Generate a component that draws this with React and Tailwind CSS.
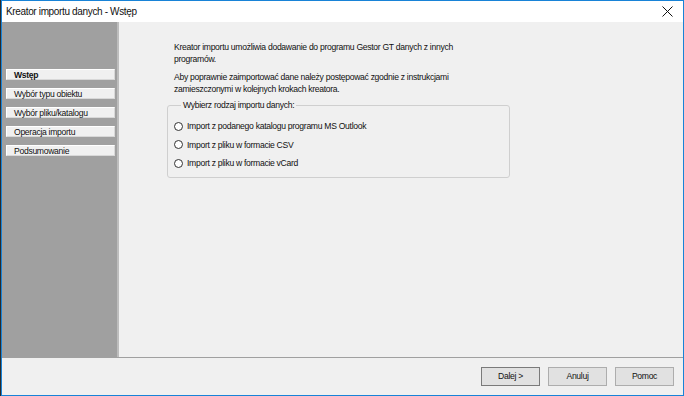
import React from "react";

const steps = [
  { id: 1, label: "Wstęp", active: true },
  { id: 2, label: "Wybór typu obiektu" },
  { id: 3, label: "Wybór pliku/katalogu" },
  { id: 4, label: "Operacja importu" },
  { id: 5, label: "Podsumowanie" },
];

const options = [
  "Import z podanego katalogu programu MS Outlook",
  "Import z pliku w formacie CSV",
  "Import z pliku w formacie vCard",
];

function StepItem({ step }) {
  return (
    <div
      className={
        "h-[11px] leading-[10px] pl-[7px] bg-[#f0f0f0] border-t border-l border-white border-b border-r border-b-[#d8d8d8] border-r-[#d8d8d8] whitespace-nowrap " +
        (step.active ? "font-bold" : "")
      }
    >
      {step.label}
    </div>
  );
}

function Radio({ label }) {
  return (
    <label className="flex items-center h-[18.5px] gap-[4px]">
      <span className="w-[9px] h-[9px] rounded-full border border-[#333] bg-white shrink-0" />
      <span>{label}</span>
    </label>
  );
}

function Button({ children, primary }) {
  return (
    <button
      className={
        "w-[59px] h-[19px] bg-[#e1e1e1] leading-none border " +
        (primary ? "border-[#7a7a7a]" : "border-[#adadad]")
      }
    >
      {children}
    </button>
  );
}

export default function App() {
  return (
    <div className="w-[684px] h-[396px] border-l border-[#2b2b2b] font-['Liberation_Sans',Arial,sans-serif] text-[8.6px] tracking-[-0.3px] text-[#111]">
      <div className="w-full h-full flex flex-col bg-[#f0f0f0] border border-[#1883d7]">
        {/* title bar */}
        <div className="h-[21px] bg-white flex items-center justify-between pl-[4px] pr-[8px] shrink-0">
          <span className="text-[10px] tracking-[-0.35px]">Kreator importu danych - Wstęp</span>
          <svg width="11" height="11" viewBox="0 0 11 11" className="mr-[2px]">
            <path d="M0.5 0.5 L10.5 10.5 M10.5 0.5 L0.5 10.5" stroke="#111" strokeWidth="1" />
          </svg>
        </div>

        {/* body */}
        <div className="flex flex-1 min-h-0">
          <aside className="w-[117px] bg-[#a0a0a0] border-r-2 border-[#bdbdbd] pt-[47px] pl-[4px] pr-[2px] flex flex-col gap-[8px] shrink-0">
            {steps.map((s) => (
              <StepItem key={s.id} step={s} />
            ))}
          </aside>

          <main className="flex-1 pl-[48px] pt-[19px] leading-[12px]">
            <p className="pl-[7px]">
              Kreator importu umożliwia dodawanie do programu Gestor GT danych z innych
              <br />
              programów.
            </p>
            <p className="pl-[7px] mt-[6px]">
              Aby poprawnie zaimportować dane należy postępować zgodnie z instrukcjami
              <br />
              zamieszczonymi w kolejnych krokach kreatora.
            </p>

            <fieldset className="w-[343px] h-[79px] mt-[4px] border border-[#cfcfcf] rounded-[3px] px-[6px] pt-[6px]">
              <legend className="ml-[7px] px-[2px]">Wybierz rodzaj importu danych:</legend>
              {options.map((o) => (
                <Radio key={o} label={o} />
              ))}
            </fieldset>
          </main>
        </div>

        {/* footer */}
        <div className="h-[38px] shrink-0 border-t border-[#a0a0a0] flex items-center justify-end gap-[8px] pr-[9px]">
          <Button primary>Dalej &gt;</Button>
          <Button>Anuluj</Button>
          <Button>Pomoc</Button>
        </div>
      </div>
    </div>
  );
}
